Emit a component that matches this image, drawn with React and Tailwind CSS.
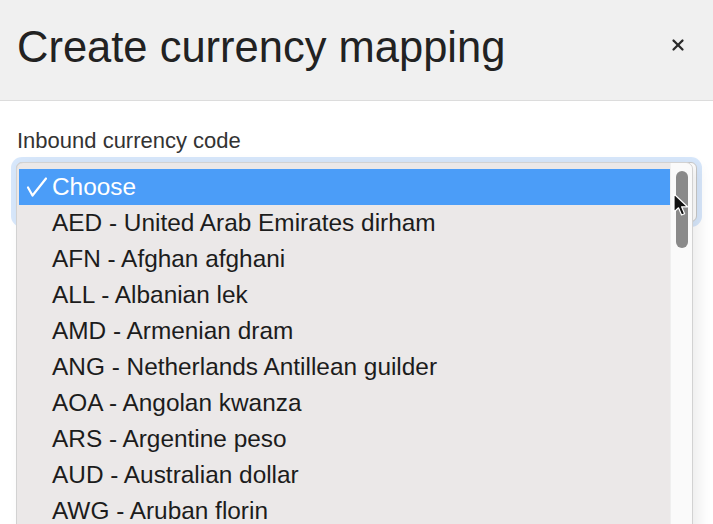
import { X } from "lucide-react";

const currencies = [
  "AED - United Arab Emirates dirham",
  "AFN - Afghan afghani",
  "ALL - Albanian lek",
  "AMD - Armenian dram",
  "ANG - Netherlands Antillean guilder",
  "AOA - Angolan kwanza",
  "ARS - Argentine peso",
  "AUD - Australian dollar",
  "AWG - Aruban florin",
  "AZN - Azerbaijani manat",
  "BAM - Bosnia and Herzegovina convertible mark",
];

const App = () => {
  return (
    <div className="relative w-[713px] h-[524px] overflow-hidden bg-white font-['Liberation_Sans',Arial,sans-serif]">
      {/* Modal header */}
      <div className="flex justify-between h-[101px] bg-[#f0f0f0] border-b border-[#dcdcdc] pl-[17px] pr-[26px] pt-[26px]">
        <h1 className="text-[43.5px] leading-none text-[#222]">Create currency mapping</h1>
        <button className="mt-[10px] h-[18px] text-[#2a2a2a]">
          <X size={18} strokeWidth={3} />
        </button>
      </div>

      {/* Body */}
      <div className="px-[16px] pt-[29px]">
        <label className="block pl-[1px] text-[22px] leading-[22px] text-[#333]">Inbound currency code</label>

        <div className="relative mt-[10px]">
          {/* the select underneath, focused */}
          <div className="h-[60px] rounded-md border border-[#c9c9c9] bg-white shadow-[0_0_0_5px_rgba(96,160,240,0.25)]" />

          {/* native options popup */}
          <div className="absolute left-0 top-0 w-[677px] h-[380px] flex rounded-[7px] border border-[#d2d2d2] bg-[#ebe8e8] shadow-[6px_4px_14px_rgba(0,0,0,0.08)] pt-[6px] pl-[2px] overflow-hidden">
            <ul className="flex-1">
              <li className="flex items-center h-[36px] bg-[#4b9df8] text-white text-[24.4px]">
                <svg width="33" height="36" viewBox="0 0 33 36" className="shrink-0">
                  <path d="M9 18.5 L13.5 26.5 L27 9.5" fill="none" stroke="white" strokeWidth="2.2" strokeLinecap="round" strokeLinejoin="round" />
                </svg>
                <span>Choose</span>
              </li>
              {currencies.map((c) => (
                <li key={c} className="flex items-center h-[36px] pl-[33px] text-[24.4px] text-[#1c1c1c] whitespace-nowrap">
                  {c}
                </li>
              ))}
            </ul>
            {/* scrollbar */}
            <div className="w-[22px] bg-[#fafafa] border-l border-[#efefef] -mt-[6px] pt-[8px] flex justify-center">
              <div className="w-[12px] h-[77px] rounded-full bg-[#8a8a8a]" />
            </div>
          </div>

          {/* mouse pointer */}
          <svg width="18" height="26" viewBox="0 0 18 26" className="absolute left-[657px] top-[31px]">
            <path d="M1 1 L1 19 L5.5 14.8 L8.6 22 L11.6 20.7 L8.6 13.8 L14.5 13.8 Z" fill="#111" stroke="white" strokeWidth="1.2" strokeLinejoin="round" />
          </svg>
        </div>
      </div>
    </div>
  );
};

export default App;
